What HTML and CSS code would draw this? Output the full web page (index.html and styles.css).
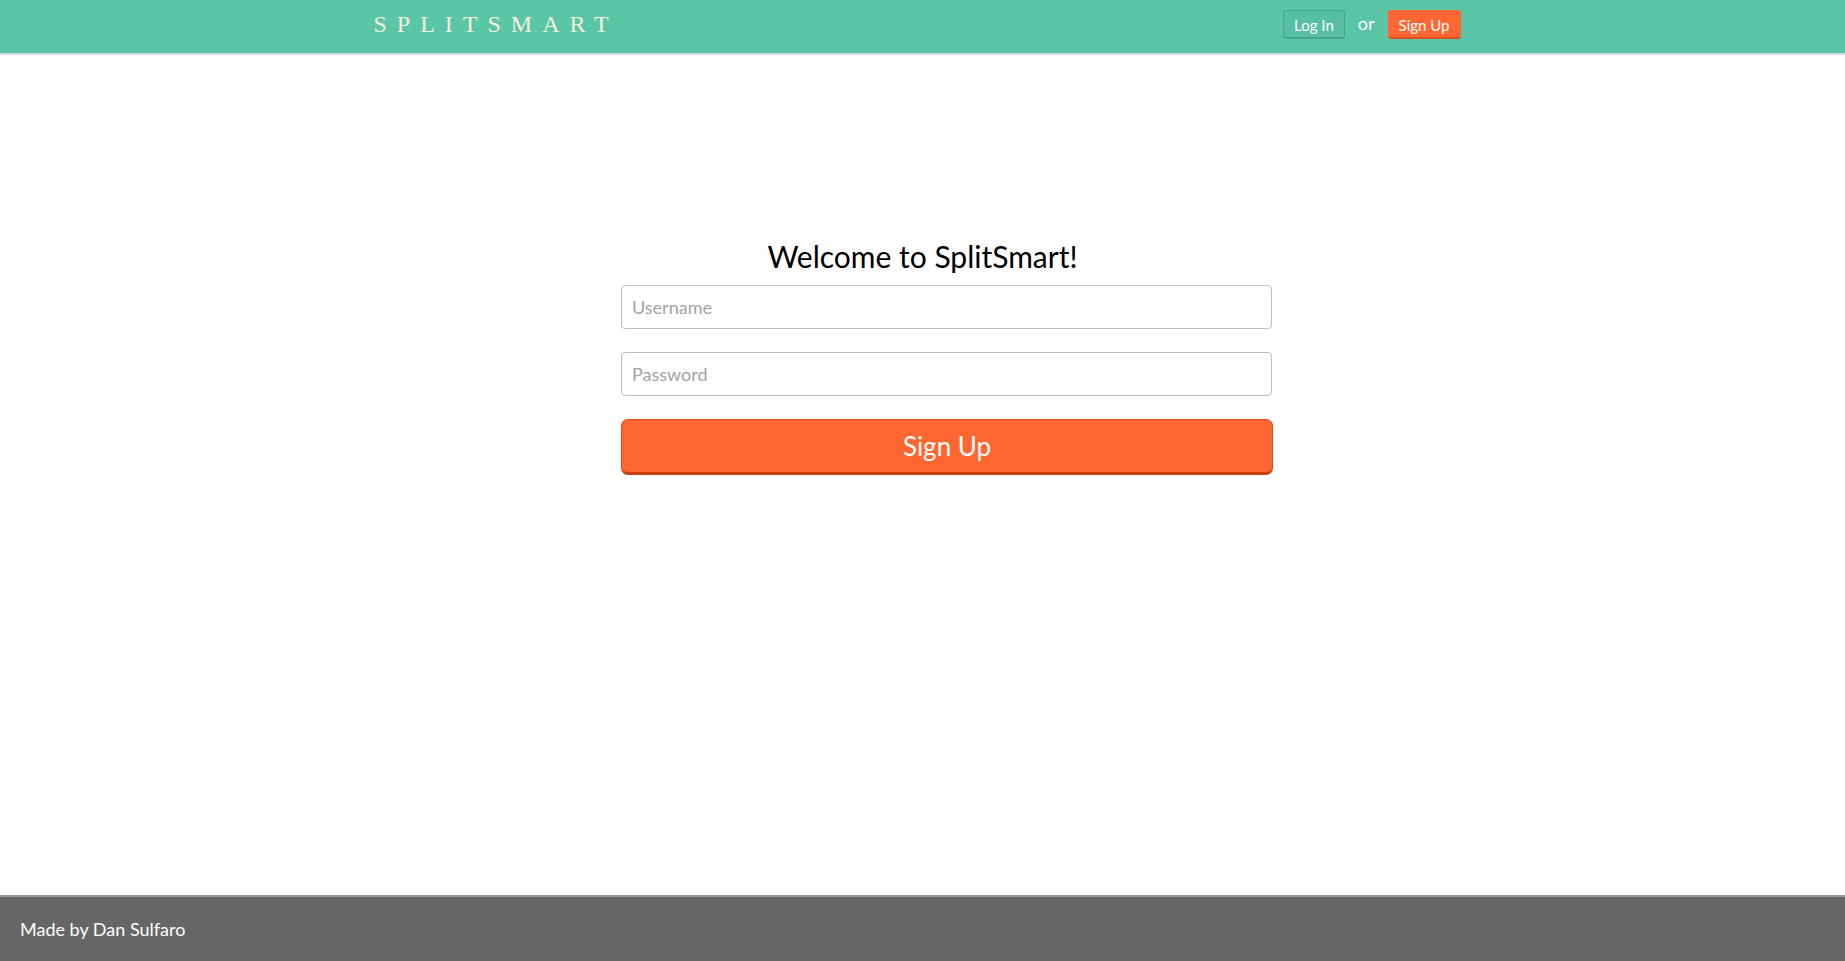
FILE: index.html
```html
<!DOCTYPE html>
<html lang="en">
<head>
<meta charset="utf-8">
<title>SplitSmart</title>
<link rel="stylesheet" href="styles.css">
</head>
<body>
<header class="topbar">
  <div class="topbar-inner">
    <div class="logo">SPLITSMART</div>
    <nav class="auth-nav">
      <a class="btn-login" href="#">Log In</a>
      <span class="or">or</span>
      <a class="btn-signup-small" href="#">Sign Up</a>
    </nav>
  </div>
</header>
<main class="main">
  <h2 class="welcome">Welcome to SplitSmart!</h2>
  <div class="form-wrap">
    <form class="signup-form">
      <input class="field" type="text" placeholder="Username">
      <input class="field" type="password" placeholder="Password">
      <button class="btn-signup" type="button">Sign Up</button>
    </form>
  </div>
</main>
<footer class="footer">Made by Dan Sulfaro</footer>
</body>
</html>
```

FILE: styles.css
```css
* { box-sizing: border-box; }
html, body { margin: 0; padding: 0; }
body {
  font-family: Lato, "Liberation Sans", sans-serif;
  min-height: 100vh;
  display: flex;
  flex-direction: column;
  background: #fff;
  color: #000;
}
.topbar {
  background: #5ac6a6;
  height: 55px;
  border-bottom: 2px solid #d8d8d8;
}
.topbar-inner {
  width: 1098px;
  margin: 0 auto;
  display: flex;
  justify-content: space-between;
  align-items: flex-start;
}
.logo {
  font-family: "Liberation Serif", "Times New Roman", serif;
  font-size: 24px;
  line-height: 27px;
  letter-spacing: 10px;
  color: #f3f0dc;
  margin-top: 11px;
}
.auth-nav {
  display: flex;
  align-items: center;
  gap: 13px;
  margin-top: 10px;
  margin-right: 11px;
}
.btn-login, .btn-signup-small {
  display: block;
  font-size: 15px;
  line-height: 18px;
  color: #fff;
  text-decoration: none;
  border-radius: 3px;
  padding: 5px 10px 3px;
}
.btn-login {
  background: #57c0a2;
  border: 1px solid #46a488;
  border-bottom-width: 2px;
}
.btn-signup-small {
  background: #ff6632;
  border: 1px solid #ff6632;
  border-bottom: 2px solid #d9501f;
}
.or {
  color: #fff;
  font-size: 18px;
  line-height: 20px;
  padding-bottom: 3px;
}
.main {
  flex: 1;
  padding-top: 183px;
}
.welcome {
  margin: 0;
  text-align: center;
  font-size: 30px;
  line-height: 36px;
  font-weight: 400;
}
.form-wrap {
  width: 699px;
  margin: 11px auto 0;
  padding-left: 48px;
}
.signup-form {
  display: flex;
  flex-direction: column;
  gap: 23px;
}
.field {
  display: block;
  width: 651px;
  height: 44px;
  border: 1px solid #bdbdbd;
  border-radius: 4px;
  padding: 0 10px;
  font-family: Lato, "Liberation Sans", sans-serif;
  font-size: 18px;
  color: #333;
  outline: none;
}
.field::placeholder { color: #a3a3a3; }
.btn-signup {
  display: block;
  width: 652px;
  height: 56px;
  background: #ff6632;
  border: 1px solid #dc4a18;
  border-bottom: 3px solid #c9400f;
  border-radius: 7px;
  color: #fff;
  font-family: Lato, "Liberation Sans", sans-serif;
  font-size: 26px;
  padding: 0;
  cursor: pointer;
}
.footer {
  background: #666;
  border-top: 2px solid #9a9a9a;
  height: 66px;
  display: flex;
  align-items: center;
  padding-left: 20px;
  color: #fff;
  font-size: 18px;
}
```
